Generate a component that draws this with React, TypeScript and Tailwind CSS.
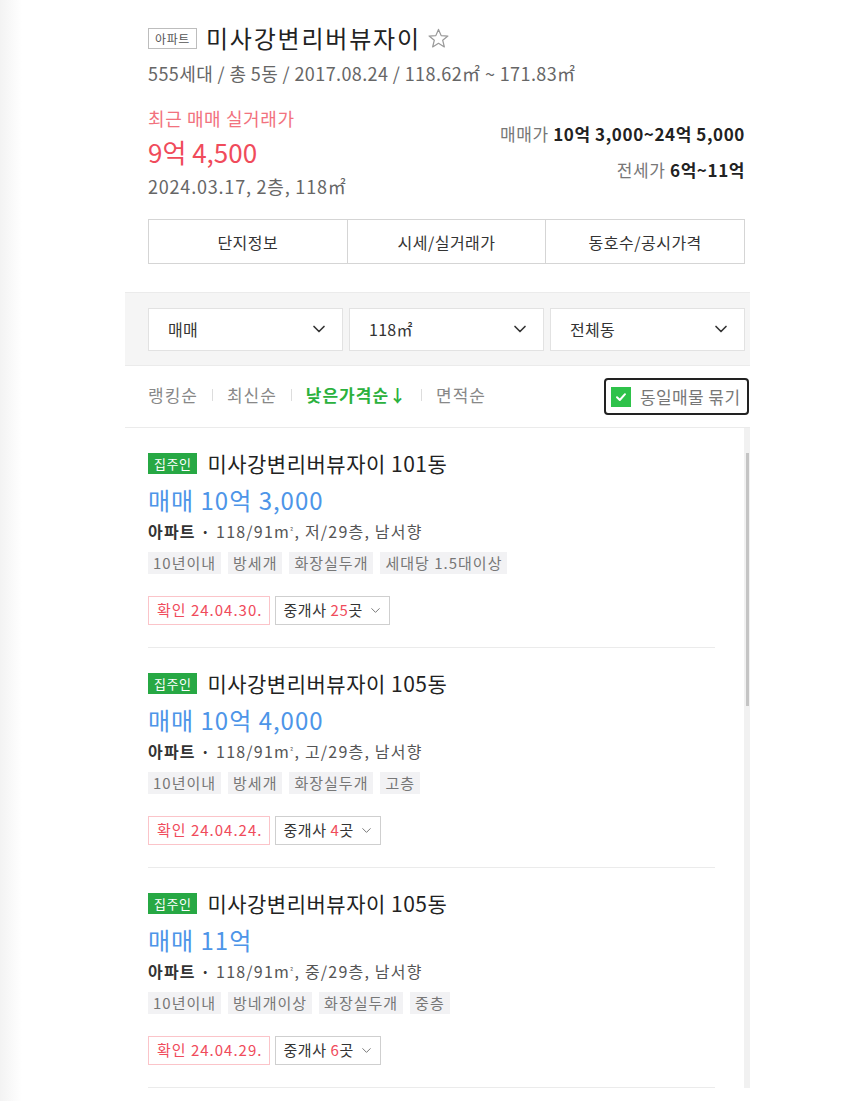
import React from "react";
import { ChevronDown } from "lucide-react";

const listings = [
  {
    title: "미사강변리버뷰자이 101동",
    price: "매매 10억 3,000",
    floor: "저/29층",
    tags: ["10년이내", "방세개", "화장실두개", "세대당 1.5대이상"],
    confirm: "24.04.30.",
    brokers: "25",
  },
  {
    title: "미사강변리버뷰자이 105동",
    price: "매매 10억 4,000",
    floor: "고/29층",
    tags: ["10년이내", "방세개", "화장실두개", "고층"],
    confirm: "24.04.24.",
    brokers: "4",
  },
  {
    title: "미사강변리버뷰자이 105동",
    price: "매매 11억",
    floor: "중/29층",
    tags: ["10년이내", "방네개이상", "화장실두개", "중층"],
    confirm: "24.04.29.",
    brokers: "6",
  },
];

function StarIcon() {
  return (
    <svg width="23" height="23" viewBox="0 0 24 24" fill="none" stroke="#9a9a9a" strokeWidth="1.3" strokeLinejoin="round">
      <polygon points="12,2.5 14.8,9 21.8,9.4 16.4,13.9 18.1,20.8 12,17 5.9,20.8 7.6,13.9 2.2,9.4 9.2,9" />
    </svg>
  );
}

function Select({ label }: { label: string }) {
  return (
    <div className="flex-1 h-[43px] bg-white border border-[#e2e2e2] flex items-center justify-between pl-[19px] pr-[13px]">
      <span className="text-[16px] text-[#333] leading-[20px] tracking-[0.3px]">{label}</span>
      <ChevronDown size={20} strokeWidth={2} color="#333" />
    </div>
  );
}

function Listing({ item }: { item: (typeof listings)[number] }) {
  return (
    <div className="pt-[24px] pb-[22px] border-b border-[#ebebeb]">
      <div className="h-[22px] flex items-center gap-[10px]">
        <span className="h-[21px] px-[6px] bg-[#27a844] text-white text-[13px] leading-[21px] tracking-[0.5px] flex items-center">집주인</span>
        <span className="text-[21px] text-[#222] leading-[22px] tracking-[0.5px]">{item.title}</span>
      </div>
      <div className="mt-[11px] h-[30px] text-[24px] leading-[30px] tracking-[1px] text-[#4d95e8]">{item.price}</div>
      <div className="mt-[6px] h-[20px] text-[16px] leading-[20px] tracking-[1.2px] text-[#555] whitespace-nowrap">
        <span className="font-bold text-[#333]">아파트</span>
        <span className="font-bold text-[#333]"> · </span>
        118/91m<sup className="text-[8px]">²</sup>, {item.floor}, 남서향
      </div>
      <div className="mt-[11px] flex gap-[7px]">
        {item.tags.map((t) => (
          <span key={t} className="h-[22px] px-[5px] bg-[#f2f2f4] text-[15px] leading-[22px] tracking-[1px] text-[#777] whitespace-nowrap">{t}</span>
        ))}
      </div>
      <div className="mt-[22px] flex gap-[5px]">
        <span className="h-[29px] pl-[8px] pr-[7px] border border-[#fbc4c9] text-[15px] tracking-[1px] text-[#f04b5b] flex items-center whitespace-nowrap">확인 {item.confirm}</span>
        <span className="h-[29px] pl-[7px] pr-[6px] border border-[#cfcfcf] text-[15px] tracking-[0.6px] text-[#333] flex items-center gap-[5px] whitespace-nowrap">
          <span>중개사 <span className="text-[#f04b5b]">{item.brokers}</span>곳</span>
          <ChevronDown size={15} strokeWidth={1.4} color="#666" />
        </span>
      </div>
    </div>
  );
}

export default function App() {
  return (
    <div className="w-full min-h-[1101px] bg-white flex font-['Noto_Sans_CJK_KR',sans-serif] overflow-hidden">
      <div className="w-[22px] shrink-0 bg-gradient-to-r from-[#f3f3f3] to-white" />
      <div className="ml-[103px] w-[625px] shrink-0 flex flex-col">
        {/* Header */}
        <div className="pl-[23px] pr-[5px] pt-[24px]">
          <div className="h-[28px] flex items-center">
            <span className="h-[21px] px-[6px] border border-[#bdbdbd] text-[12px] leading-[19px] tracking-[0.6px] text-[#555] flex items-center">아파트</span>
            <span className="ml-[9px] text-[24px] leading-[28px] text-[#222] tracking-[1.8px]">미사강변리버뷰자이</span>
            <span className="ml-[6px] flex items-center"><StarIcon /></span>
          </div>
          <div className="mt-[11px] h-[20px] text-[18px] leading-[20px] text-[#666] tracking-[0.4px] whitespace-nowrap">
            555세대 / 총 5동 / 2017.08.24 / 118.62㎡ ~ 171.83㎡
          </div>
          <div className="mt-[25px] flex justify-between">
            <div className="flex flex-col">
              <div className="h-[20px] text-[18px] leading-[20px] tracking-[0.6px] text-[#f2727e]">최근 매매 실거래가</div>
              <div className="mt-[9px] h-[30px] text-[26px] leading-[30px] text-[#f04b5b]">9억 4,500</div>
              <div className="mt-[9px] h-[20px] text-[18px] leading-[20px] tracking-[0.8px] text-[#666]">2024.03.17, 2층, 118㎡</div>
            </div>
            <div className="flex flex-col items-end pt-[16px]">
              <div className="h-[20px] text-[17px] leading-[20px] tracking-[0.6px] text-[#777] whitespace-nowrap">
                매매가 <span className="font-semibold text-[#222]">10억 3,000~24억 5,000</span>
              </div>
              <div className="mt-[16px] h-[20px] text-[17px] leading-[20px] tracking-[0.6px] text-[#777] whitespace-nowrap">
                전세가 <span className="font-semibold text-[#222]">6억~11억</span>
              </div>
            </div>
          </div>
          <div className="mt-[23px] h-[45px] border border-[#d5d5d5] flex text-[16px] tracking-[0.5px] text-[#333]">
            <div className="flex-1 flex items-center justify-center">단지정보</div>
            <div className="flex-1 flex items-center justify-center border-l border-[#d5d5d5]">시세/실거래가</div>
            <div className="flex-1 flex items-center justify-center border-l border-[#d5d5d5]">동호수/공시가격</div>
          </div>
        </div>

        {/* Filters */}
        <div className="mt-[28px] h-[74px] bg-[#f5f5f5] border-t border-b border-[#ebebeb] pl-[23px] pr-[5px] flex items-center gap-[6px]">
          <Select label="매매" />
          <Select label="118㎡" />
          <Select label="전체동" />
        </div>

        {/* Sort row */}
        <div className="h-[62px] border-b border-[#ebebeb] pl-[23px] pr-[1px] flex items-center justify-between">
          <div className="flex items-center text-[17px] tracking-[1px] text-[#888] -mt-[4px]">
            <span>랭킹순</span>
            <span className="mx-[14px] w-px h-[12px] bg-[#ddd]" />
            <span>최신순</span>
            <span className="mx-[14px] w-px h-[12px] bg-[#ddd]" />
            <span className="font-bold text-[#2bb13d]">낮은가격순↓</span>
            <span className="mx-[14px] w-px h-[12px] bg-[#ddd]" />
            <span>면적순</span>
          </div>
          <div className="h-[37px] w-[145px] border-2 border-[#222] rounded-[4px] flex items-center pl-[5px] gap-[9px] overflow-hidden">
            <span className="w-[20px] h-[20px] shrink-0 bg-[#2ec24a] flex items-center justify-center">
              <svg width="12" height="12" viewBox="0 0 12 12" fill="none" stroke="white" strokeWidth="2" strokeLinecap="round" strokeLinejoin="round">
                <polyline points="2,6.3 4.8,9 10,3.2" />
              </svg>
            </span>
            <span className="text-[17px] tracking-[0.4px] text-[#777] whitespace-nowrap">동일매물 묶기</span>
          </div>
        </div>

        {/* List */}
        <div className="h-[660px] flex overflow-hidden">
          <div className="flex-1 pl-[23px] pr-[29px]">
            {listings.map((l, i) => (
              <Listing key={i} item={l} />
            ))}
          </div>
          <div className="w-[6px] bg-[#f1f1f1] pt-[25px]">
            <div className="ml-[2px] w-[3px] h-[253px] bg-[#c4c4c4]" />
          </div>
        </div>
      </div>
    </div>
  );
}
